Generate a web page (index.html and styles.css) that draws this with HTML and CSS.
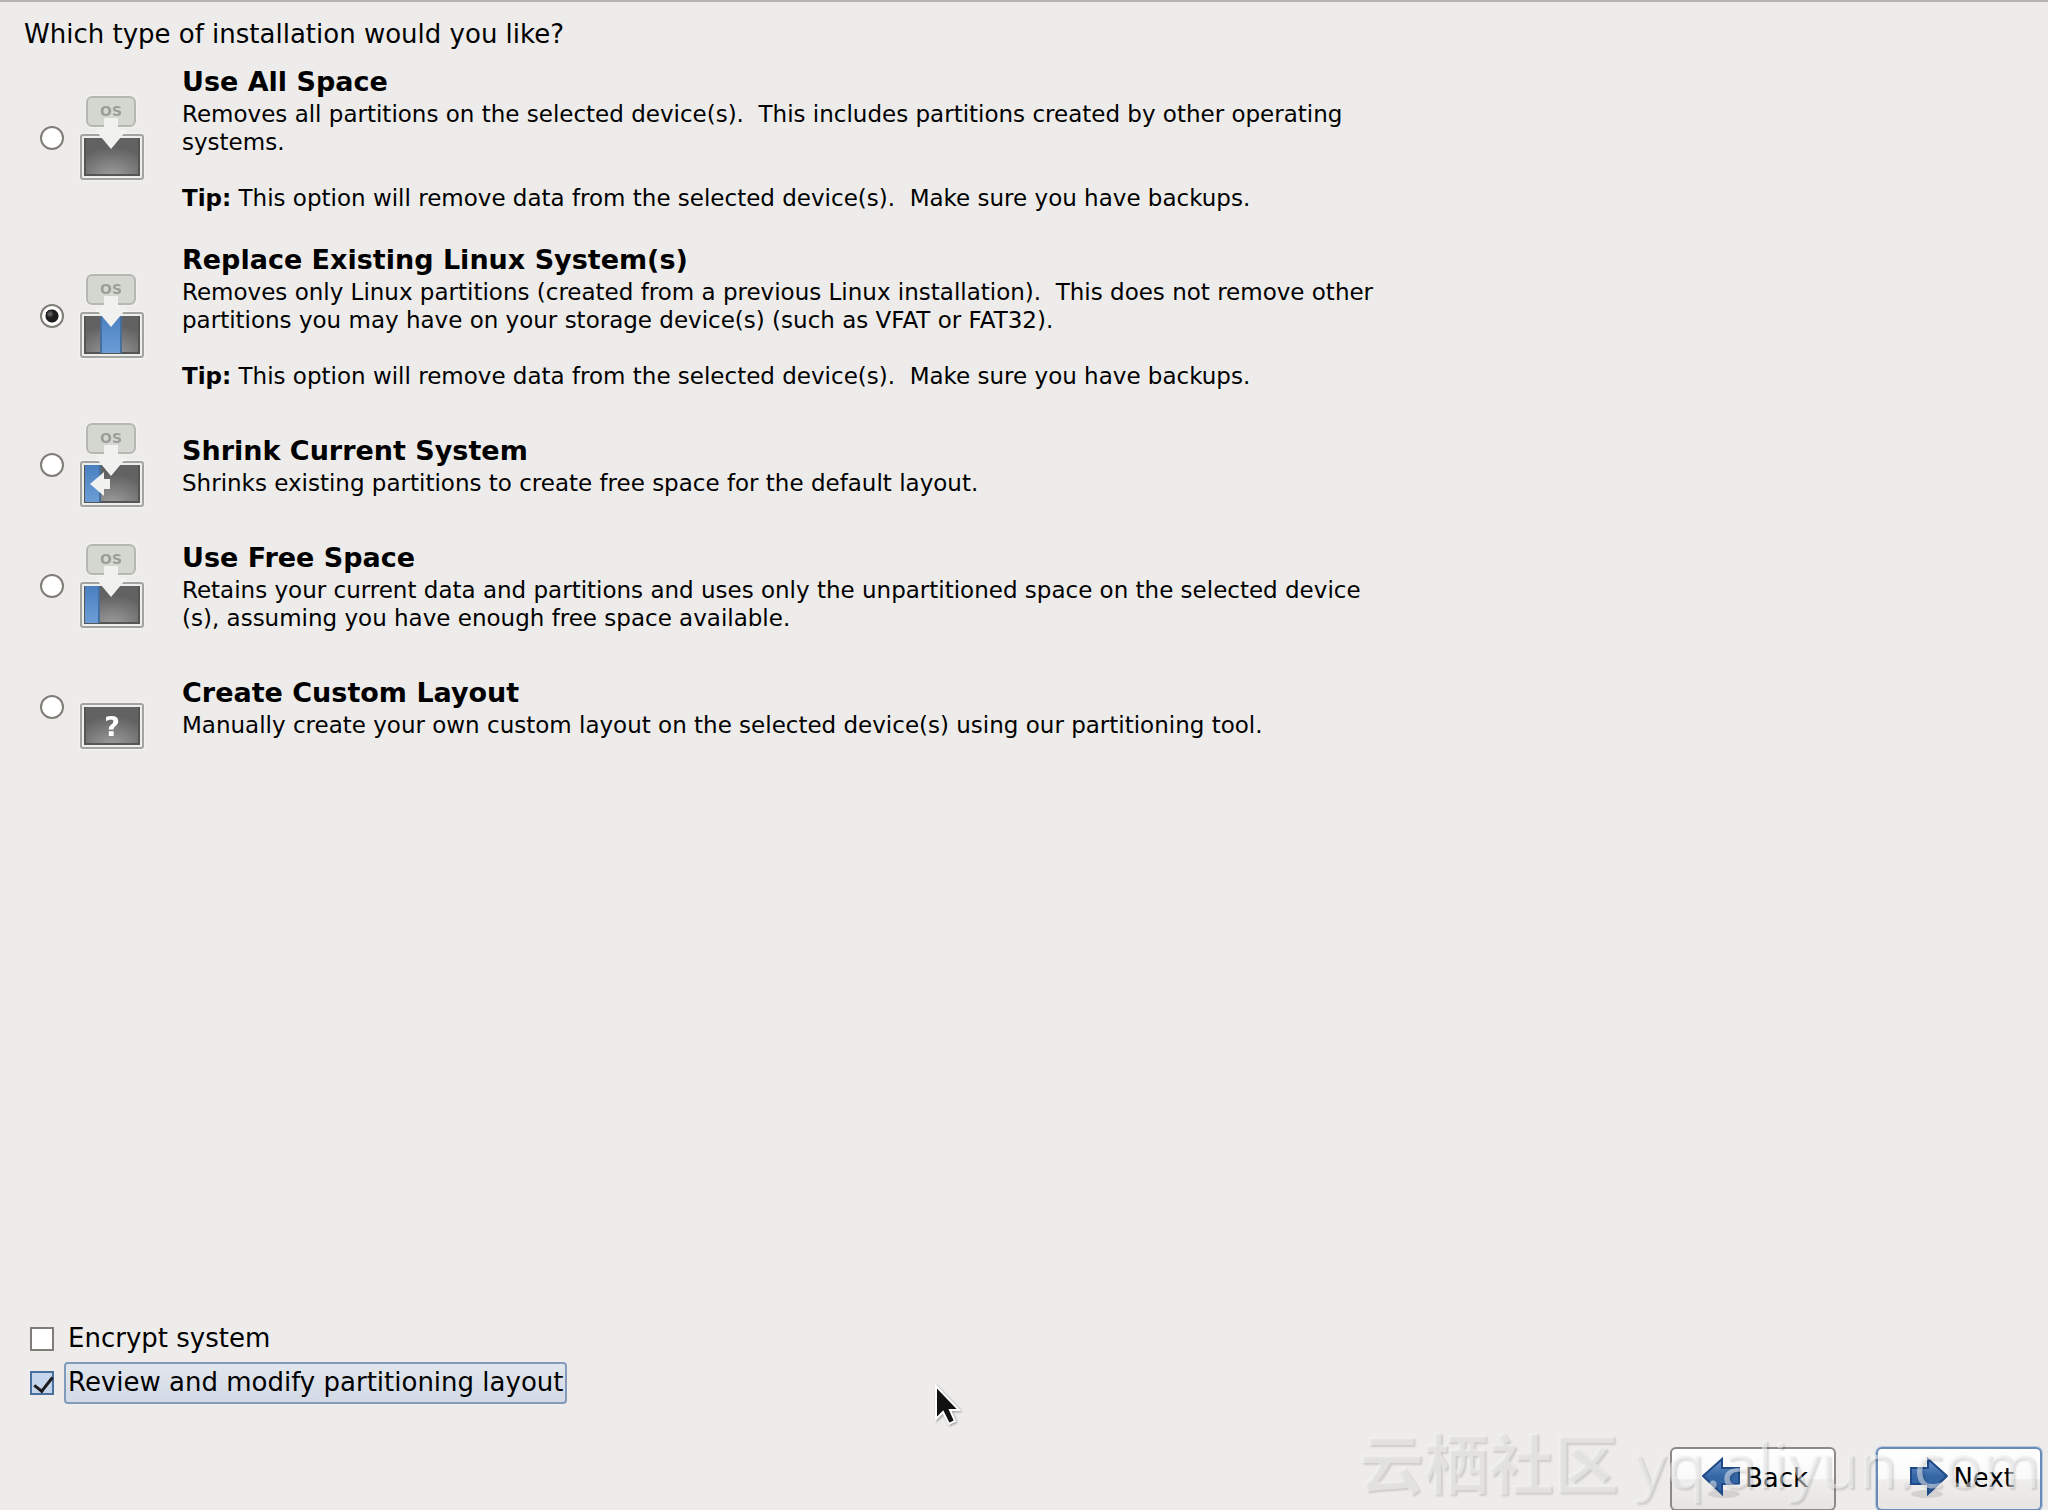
FILE: index.html
```html
<!doctype html>
<html lang="en">
<head>
	<meta charset="utf-8">
	<meta name="viewport" content="width=device-width, initial-scale=1.0">
	<title>Installation Type</title>
	<link rel="stylesheet" href="styles.css">
</head>
<body>

<!-- shared icon parts -->
<svg class="defs" width="0" height="0" aria-hidden="true">
	<defs>
		<radialGradient id="disk-fill" cx="0.5" cy="1" r="0.75">
			<stop offset="0" stop-color="#9c9c9c" />
			<stop offset="1" stop-color="#626262" />
		</radialGradient>
		<linearGradient id="blue-fill" x1="0" y1="0" x2="0" y2="1">
			<stop offset="0" stop-color="#4a80c0" />
			<stop offset="1" stop-color="#6c9dd6" />
		</linearGradient>
		<linearGradient id="arrow-fill" x1="0" y1="0" x2="0" y2="1">
			<stop offset="0" stop-color="#6d96cc" />
			<stop offset="0.5" stop-color="#3465a4" />
			<stop offset="1" stop-color="#3465a4" />
		</linearGradient>
		<g id="disk">
			<rect x="1" y="39" width="62" height="44" rx="2" fill="#eeeeec" stroke="#a2a4a0" stroke-width="2" />
			<rect x="4" y="42" width="56" height="38" fill="url(#disk-fill)" />
			<path d="M5 42V79H59V42" fill="none" stroke="#555" stroke-width="2" />
		</g>
		<g id="os">
			<rect x="7" y="1" width="48" height="29" rx="5" fill="#d3d7cf" stroke="#b4b8b1" stroke-width="2" />
			<text x="31" y="20" text-anchor="middle" class="os-text">OS</text>
		</g>
		<path id="down" d="M24 22H38V35H46L31 53L16 35H24Z" fill="#f1f1f0" />
	</defs>
</svg>

<form class="installer">
	<h1>Which type of installation would you like?</h1>

	<div class="options">
		<div class="option">
			<input type="radio" name="type" id="all">
			<svg class="icon" viewBox="0 0 64 84">
				<use href="#os" /><use href="#disk" /><use href="#down" />
			</svg>
			<label for="all">
				<strong>Use All Space</strong>
				<span>Removes all partitions on the selected device(s).&nbsp; This includes partitions created by other operating<br>systems.<br><br><b>Tip:</b> This option will remove data from the selected device(s).&nbsp; Make sure you have backups.</span>
			</label>
		</div>

		<div class="option">
			<input type="radio" name="type" id="replace" checked>
			<svg class="icon" viewBox="0 0 64 84">
				<use href="#os" /><use href="#disk" />
				<rect x="20" y="42" width="22" height="37" fill="url(#blue-fill)" />
				<path d="M21 42V79M41 42V79" stroke="#456f9f" stroke-width="2" />
				<use href="#down" />
			</svg>
			<label for="replace">
				<strong>Replace Existing Linux System(s)</strong>
				<span>Removes only Linux partitions (created from a previous Linux installation).&nbsp; This does not remove other<br>partitions you may have on your storage device(s) (such as VFAT or FAT32).<br><br><b>Tip:</b> This option will remove data from the selected device(s).&nbsp; Make sure you have backups.</span>
			</label>
		</div>

		<div class="option">
			<input type="radio" name="type" id="shrink">
			<svg class="icon" viewBox="0 0 64 84">
				<use href="#os" /><use href="#disk" />
				<rect x="5" y="42" width="15" height="37" fill="url(#blue-fill)" />
				<path d="M20 42V79" stroke="#456f9f" stroke-width="2" />
				<use href="#down" />
				<path d="M10 61L24 49V56H30V66H24V73Z" fill="#f1f1f0" />
			</svg>
			<label for="shrink">
				<strong>Shrink Current System</strong>
				<span>Shrinks existing partitions to create free space for the default layout.</span>
			</label>
		</div>

		<div class="option">
			<input type="radio" name="type" id="free">
			<svg class="icon" viewBox="0 0 64 84">
				<use href="#os" /><use href="#disk" />
				<rect x="5" y="42" width="14" height="37" fill="url(#blue-fill)" />
				<path d="M19 42V79" stroke="#456f9f" stroke-width="2" />
				<use href="#down" />
			</svg>
			<label for="free">
				<strong>Use Free Space</strong>
				<span>Retains your current data and partitions and uses only the unpartitioned space on the selected device<br>(s), assuming you have enough free space available.</span>
			</label>
		</div>

		<div class="option">
			<input type="radio" name="type" id="custom">
			<svg class="icon" viewBox="0 0 64 84">
				<use href="#disk" />
				<text x="32" y="71" text-anchor="middle" class="q-text">?</text>
			</svg>
			<label for="custom">
				<strong>Create Custom Layout</strong>
				<span>Manually create your own custom layout on the selected device(s) using our partitioning tool.</span>
			</label>
		</div>
	</div>

	<div class="checks">
		<div class="check">
			<input type="checkbox" id="encrypt">
			<label for="encrypt">Encrypt system</label>
		</div>
		<div class="check">
			<input type="checkbox" id="review" checked>
			<label for="review" class="focused">Review and modify partitioning layout</label>
		</div>
	</div>

	<div class="buttons">
		<button type="button">
			<svg viewBox="0 0 38 42" width="38" height="42">
				<ellipse cx="22" cy="37" rx="16" ry="4" fill="#000" opacity="0.1" />
				<path d="M1 19L20 2V11H37V27H20V37Z" fill="url(#arrow-fill)" stroke="#204a87" stroke-width="2" />
			</svg>
			Back
		</button>
		<button type="button" class="default">
			<svg viewBox="0 0 38 42" width="38" height="42">
				<ellipse cx="17" cy="37" rx="16" ry="4" fill="#000" opacity="0.1" />
				<path d="M37 19L18 2V11H1V27H18V37Z" fill="url(#arrow-fill)" stroke="#204a87" stroke-width="2" />
			</svg>
			Next
		</button>
	</div>

	<div class="watermark"><b>云栖社区</b> yq.aliyun.com</div>
</form>

<svg class="pointer" viewBox="0 0 28 42" width="28" height="42">
	<path d="M2 2V35L9 28L15 40L21 37L16 26H25Z" fill="#111" stroke="#fff" stroke-width="2" />
</svg>

</body>
</html>
```
FILE: styles.css
```css
* {
	box-sizing: border-box;
}
body {
	background: #edecea;
	font-family: "DejaVu Sans", sans-serif;
	font-size: 26px;
	color: #000;
	margin: 0;
}
.defs {
	position: absolute;
}
.installer {
	position: relative;
	display: flex;
	flex-direction: column;
	height: 100vh;
	min-height: 1100px;
	overflow: hidden;
	border-top: 2px solid #b5b4b2;
}
h1 {
	font-size: 26px;
	font-weight: normal;
	line-height: 32px;
	margin: 16px 24px 14px;
}

.options {
	display: flex;
	flex-direction: column;
	gap: 30px;
	padding: 0 40px;
}
.option {
	display: flex;
	align-items: center;
	min-height: 90px;
}
.option label {
	margin-left: 38px;
}
.option strong {
	display: block;
	font-size: 27px;
	line-height: 36px;
}
.option span {
	display: block;
	font-size: 23px;
	line-height: 28px;
}
.icon {
	flex: none;
	width: 64px;
	height: 84px;
	margin-left: 16px;
	filter: drop-shadow(0 0 1px #fff);
}
.os-text {
	font-size: 14px;
	font-weight: bold;
	fill: #9b9e98;
}
.q-text {
	font-size: 27px;
	font-weight: bold;
	fill: #fff;
}

input {
	appearance: none;
	flex: none;
	width: 24px;
	height: 24px;
	margin: 0;
	background: #fff;
	border: 2px solid #807d78;
}
input[type="radio"] {
	border-radius: 50%;
}
input[type="radio"]:checked {
	background: radial-gradient(circle at 8px 8px, #777 0, #1c1c1c 4px, transparent 4px), radial-gradient(circle, #1c1c1c 6px, #fff 7px);
}
input[type="checkbox"]:checked {
	border-color: #4a6f9f;
	background: #c5d6ec;
}

.checks {
	margin-top: auto;
	padding-left: 30px;
}
.check {
	display: flex;
	align-items: center;
	gap: 10px;
	height: 44px;
}
.check label {
	line-height: 36px;
	height: 42px;
	padding: 0 2px;
	border: 2px solid transparent;
	border-radius: 4px;
}
.check .focused {
	border-color: #839bbb;
	background: linear-gradient(#e2e6ec, #d3dae6);
}
#review {
	position: relative;
}
#review:checked::after {
	content: "";
	position: absolute;
	left: 6px;
	top: 0;
	width: 8px;
	height: 16px;
	border: solid #1c1c1c;
	border-width: 0 3px 3px 0;
	transform: rotate(38deg);
}

.buttons {
	display: flex;
	justify-content: flex-end;
	gap: 40px;
	margin: 42px 6px -1px 0;
}
button {
	display: flex;
	align-items: center;
	justify-content: flex-end;
	gap: 5px;
	width: 166px;
	height: 64px;
	padding: 0 26px 2px 0;
	font: inherit;
	color: #000;
	border: 2px solid #8d8a86;
	border-radius: 6px;
	background: linear-gradient(#fff, #fafafa 50%, #efeeed 51%, #e6e5e3);
}
button.default {
	border-color: #6a8bb8;
	box-shadow: 0 0 0 1px #b7c8df;
}

.watermark {
	position: absolute;
	right: 8px;
	bottom: 2px;
	font-family: "Open Sans", "Noto Sans CJK SC", sans-serif;
	font-size: 63px;
	line-height: 88px;
	white-space: nowrap;
	color: rgba(245, 245, 245, 0.5);
	text-shadow: 2px 2px 2px rgba(0, 0, 0, 0.13);
	pointer-events: none;
}
.watermark b {
	font-family: "Noto Sans CJK SC", sans-serif;
	font-size: 65px;
	font-weight: 700;
}
.pointer {
	position: absolute;
	left: 934px;
	top: 1384px;
	filter: drop-shadow(1px 1px 1px #999);
}
```
